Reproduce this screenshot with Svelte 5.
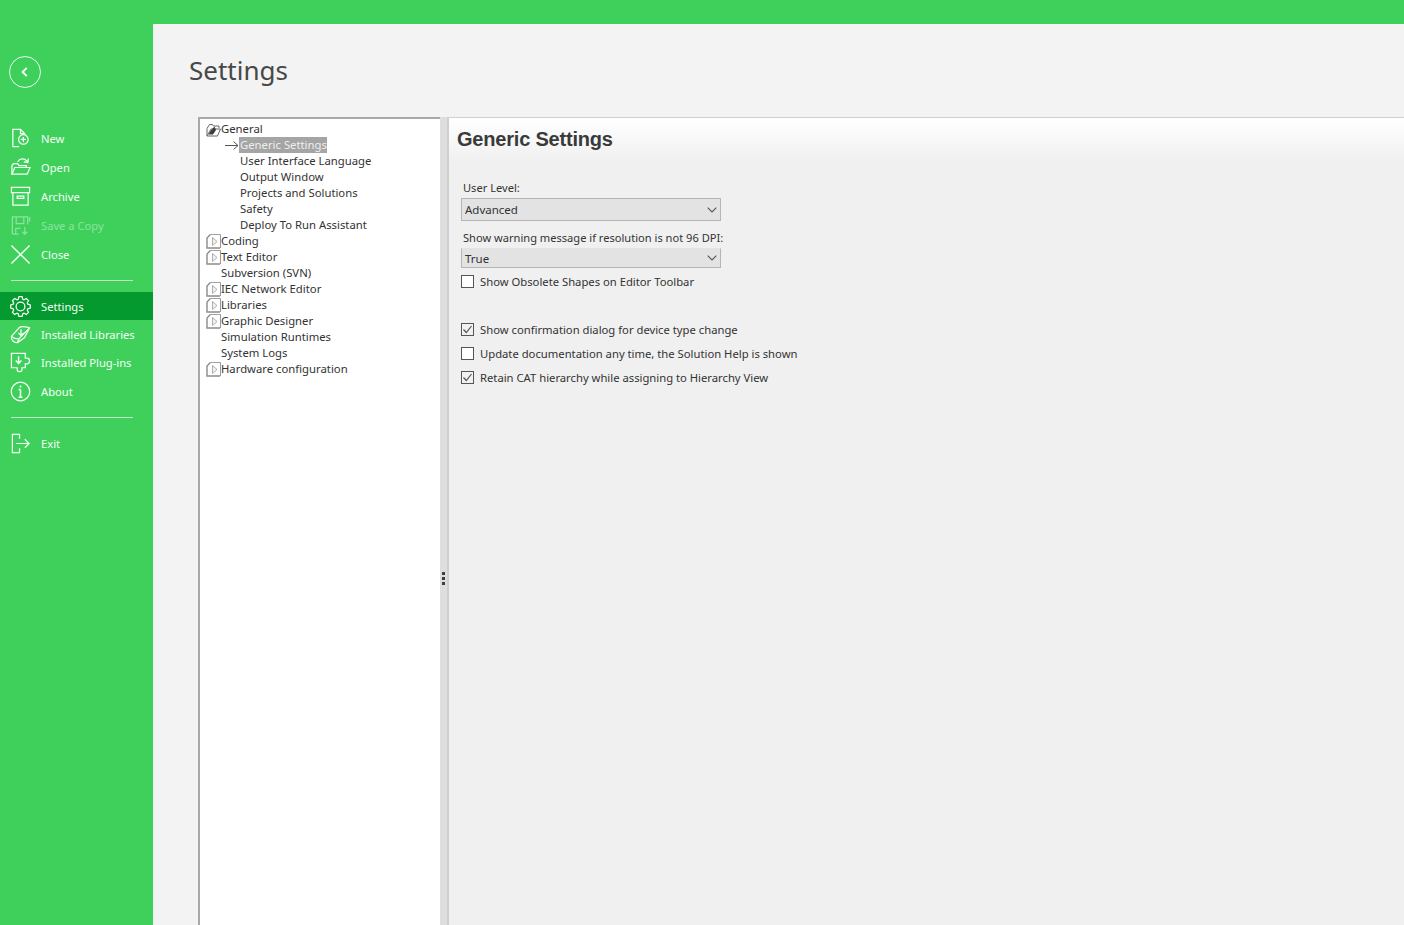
<script>
  const nav1 = [
    { label: 'New', icon: 'new' },
    { label: 'Open', icon: 'open' },
    { label: 'Archive', icon: 'archive' },
    { label: 'Save a Copy', icon: 'save', disabled: true },
    { label: 'Close', icon: 'close' }
  ];
  const nav2 = [
    { label: 'Settings', icon: 'gear', active: true },
    { label: 'Installed Libraries', icon: 'lib' },
    { label: 'Installed Plug-ins', icon: 'plug' },
    { label: 'About', icon: 'info' }
  ];
  const tree = [
    { t: 'General', k: 'open' },
    { t: 'Generic Settings', k: 'sel' },
    { t: 'User Interface Language', k: 'sub' },
    { t: 'Output Window', k: 'sub' },
    { t: 'Projects and Solutions', k: 'sub' },
    { t: 'Safety', k: 'sub' },
    { t: 'Deploy To Run Assistant', k: 'sub' },
    { t: 'Coding', k: 'closed' },
    { t: 'Text Editor', k: 'closed' },
    { t: 'Subversion (SVN)', k: 'leaf' },
    { t: 'IEC Network Editor', k: 'closed' },
    { t: 'Libraries', k: 'closed' },
    { t: 'Graphic Designer', k: 'closed' },
    { t: 'Simulation Runtimes', k: 'leaf' },
    { t: 'System Logs', k: 'leaf' },
    { t: 'Hardware configuration', k: 'closed' }
  ];

  function gearPath(cx, cy, outer, inner, teeth) {
    const pts = [];
    const step = (Math.PI * 2) / teeth;
    for (let i = 0; i < teeth; i++) {
      const a = i * step - Math.PI / 2;
      const w = step * 0.2;
      const p = [
        [a - step / 2 + w * 0.55, inner],
        [a - w, outer],
        [a + w, outer],
        [a + step / 2 - w * 0.55, inner]
      ];
      for (const [ang, r] of p) {
        pts.push(`${(cx + r * Math.cos(ang)).toFixed(2)} ${(cy + r * Math.sin(ang)).toFixed(2)}`);
      }
    }
    return 'M' + pts.join('L') + 'Z';
  }
  const gear = gearPath(11, 11, 10.4, 8, 8);
</script>

{#snippet icon(name)}
  <svg class="ico" viewBox="0 0 22 22" fill="none" stroke="currentColor" stroke-width="1.3">
    {#if name === 'new'}
      <path d="M9.5 19.5H3V1.5H11L15.5 6V7M11 1.5V6H15.5" />
      <circle cx="14" cy="12" r="5" />
      <path d="M14 9.3V14.7M11.3 12H16.7" />
    {:else if name === 'open'}
      <path d="M2 18V9L3.5 7H8L9.5 9H17V11" />
      <path d="M2 18L5 11H21L18 18Z" />
      <path d="M8 5C10 1.5 14.5 .8 17.5 3.8L18.5 5.5M19.2 1.5L18.7 5.7L14.5 5.2" />
    {:else if name === 'archive'}
      <path d="M1.5 1.5H20.5V7H1.5ZM3 7V20H19V7" />
      <path d="M7.5 10.5H14.5V13H7.5Z" />
    {:else if name === 'save'}
      <path d="M2.5 20V2H18.5V10M2.5 20H9M6.5 2V9H14.5V2M6 20V14H11" />
      <path d="M15.5 12.5V20M13 17.5L15.5 20L18 17.5M20.5 2V7" />
    {:else if name === 'close'}
      <path d="M1.5 1.5L20.5 20.5M20.5 1.5L1.5 20.5" stroke-width="1.5" />
    {:else if name === 'gear'}
      <path d={gear} />
      <circle cx="11" cy="11" r="4.6" />
    {:else if name === 'lib'}
      <path d="M1.5 13L10 3.5C12 2.5 15 2.5 20.5 4L15 14.5L8 19.5C4 19.5 1 17 1.5 13Z" />
      <path d="M1.5 13C4 15 7 16 9.5 15.5L20.5 4M9.5 15.5C8.5 17 8 18 8 19.5" />
      <path d="M11.5 5.5V12M8.7 9.3L11.5 12L14.3 9.3" />
    {:else if name === 'plug'}
      <path d="M1.5 1.5H16V6.5H17.5C19.5 6.5 20.5 8 20.5 9.5C20.5 11 19.5 12.5 17.5 12.5H16V16.5H12.5V18.5C12.5 20 11.5 20.5 10 20.5C8.5 20.5 7.5 20 7.5 18.5V16.5H1.5Z" />
      <path d="M9 4.5V12M6 9L9 12L12 9" stroke-width="1.5" />
    {:else if name === 'info'}
      <circle cx="11" cy="11" r="9.7" />
      <path d="M11 9V17M9 17H13M9 9H11" stroke-width="1.6" />
      <circle cx="11" cy="5.7" r="1.1" fill="currentColor" stroke="none" />
    {:else if name === 'exit'}
      <path d="M10 6V1.5H2.5V20.5H10V16" />
      <path d="M6.5 11H20M15.5 6.5L20 11L15.5 15.5" />
    {/if}
  </svg>
{/snippet}

{#snippet twisty(open)}
  <svg class="twisty" viewBox="0 0 15 15" fill="none">
    {#if open}
      <path d="M1 14V6.5L3.5 2.5H6.5L7.5 4H13V6" stroke="#666" stroke-width="1" />
      <path d="M1 14H11.5L14.5 7H5Z" stroke="#666" stroke-width="1" />
      <path d="M2.5 12.5L4.5 9L8.5 4.5L10 8L7 12.5Z" fill="#3c3c3c" />
    {:else}
      <path d="M4.5 .5H14.5" stroke="#a0a0a0" stroke-width="1" />
      <path d="M4.5 .5L1 4V14H14" stroke="#8a8a8a" stroke-width="1.4" />
      <path d="M14.5 .5V14" stroke="#999" stroke-width="1" />
      <path d="M6.5 3.5L11 7.5L6.5 11.5Z" fill="#f4f4f4" stroke="#a5a5a5" stroke-width=".9" />
    {/if}
  </svg>
{/snippet}

{#snippet check(checked)}
  <span class="check" class:on={checked}>
    {#if checked}
      <svg viewBox="0 0 11 11" fill="none"><path d="M1.5 5.5L4.3 8.5L9.5 2" stroke="#555" stroke-width="1.2" /></svg>
    {/if}
  </span>
{/snippet}

{#snippet combo(value, low)}
  <div class="combo" class:low>
    <span>{value}</span>
    <svg viewBox="0 0 10 6" fill="none"><path d="M.7 .7L5 5L9.3 .7" stroke="#555" stroke-width="1.1" /></svg>
  </div>
{/snippet}

<div class="page">
  <aside class="sidebar">
    <button class="back" aria-label="Back">
      <svg viewBox="0 0 10 12" fill="none"><path d="M6.5 2.5L3 6L6.5 9.5" stroke="#fff" stroke-width="1.6" /></svg>
    </button>
    <nav class="group first">
      {#each nav1 as n}
        <div class="item" class:disabled={n.disabled}>{@render icon(n.icon)}<span>{n.label}</span></div>
      {/each}
    </nav>
    <hr />
    <nav class="group second">
      {#each nav2 as n}
        <div class="item tight" class:active={n.active}>{@render icon(n.icon)}<span>{n.label}</span></div>
      {/each}
    </nav>
    <hr class="low" />
    <div class="item exit">{@render icon('exit')}<span>Exit</span></div>
  </aside>

  <main class="main">
    <div class="topbar"></div>
    <h1>Settings</h1>
    <div class="panels">
      <div class="tree">
        {#each tree as r}
          <div class="row {r.k}">
            {#if r.k === 'open'}{@render twisty(true)}{:else if r.k === 'closed'}{@render twisty(false)}{/if}
            {#if r.k === 'sel'}
              <svg class="arrow" viewBox="0 0 14 9" fill="none"><path d="M0 4.5H13M8.5 .5L13 4.5L8.5 8.5" stroke="#555" stroke-width="1" /></svg>
            {/if}
            <span>{r.t}</span>
          </div>
        {/each}
      </div>
      <div class="splitter"><i></i><i></i><i></i></div>
      <section class="content">
        <h2>Generic Settings</h2>
        <div class="lbl first-lbl">User Level:</div>
        {@render combo('Advanced', false)}
        <div class="lbl second-lbl">Show warning message if resolution is not 96 DPI:</div>
        {@render combo('True', true)}
        <div class="cb cb0">{@render check(false)}<span>Show Obsolete Shapes on Editor Toolbar</span></div>
        <div class="cb cb1">{@render check(true)}<span>Show confirmation dialog for device type change</span></div>
        <div class="cb">{@render check(false)}<span>Update documentation any time, the Solution Help is shown</span></div>
        <div class="cb">{@render check(true)}<span>Retain CAT hierarchy while assigning to Hierarchy View</span></div>
      </section>
    </div>
  </main>
</div>

<style>
  :global(body) { margin: 0; overflow: hidden; }
  .page {
    display: flex;
    width: 1404px;
    height: 925px;
    overflow: hidden;
    font-family: "Noto Sans", "Open Sans", sans-serif;
    font-size: 11.25px;
    color: #2b2b2b;
    background: #f3f3f3;
  }
  .sidebar {
    width: 153px;
    flex: none;
    background: #3fd05c;
    color: #fff;
    display: flex;
    flex-direction: column;
    padding-top: 56px;
    box-sizing: border-box;
  }
  .back {
    width: 32px;
    height: 32px;
    margin-left: 9px;
    padding: 0;
    border: 1.5px solid #eafbef;
    border-radius: 50%;
    background: none;
    display: flex;
    align-items: center;
    justify-content: center;
    box-sizing: border-box;
  }
  .back svg { width: 12px; height: 14px; }
  .group.first { margin-top: 36px; }
  .item {
    display: flex;
    align-items: center;
    height: 29px;
    padding-left: 10px;
    gap: 10px;
    font-size: 11.2px;
    color: #f4fff6;
  }
  .item.tight { height: 28px; }
  .item.tight:last-child { height: 30px; }
  .item.active { background: #059a30; }
  .item.disabled { color: #8ce49d; }
  .ico { width: 21px; height: 21px; flex: none; }
  hr {
    width: 122px;
    margin: 11px 0 11px 11px;
    border: 0;
    border-top: 1px solid #bfe9c9;
    height: 0;
  }
  hr.low { margin: 11px 0 11px 11px; }
  .group.second { margin: 0; }

  .main { flex: 1; min-width: 0; display: flex; flex-direction: column; }
  .topbar { height: 24px; background: #3fd05c; flex: none; }
  h1 {
    margin: 26px 0 0 36px;
    height: 67px;
    font-size: 26px;
    font-weight: 400;
    line-height: 40px;
    color: #484848;
    flex: none;
  }
  .panels { flex: 1; display: flex; margin-left: 45px; min-height: 0; }
  .tree {
    width: 242px;
    flex: none;
    box-sizing: border-box;
    background: #fff;
    border-top: 2px solid #a8a8a8;
    border-left: 2px solid #a8a8a8;
    padding: 2px 0 0 6px;
    font-size: 11.3px;
  }
  .row {
    height: 16px;
    display: flex;
    align-items: center;
    line-height: 16px;
    white-space: nowrap;
    color: #333;
  }
  .row.leaf { padding-left: 15px; }
  .row.sub { padding-left: 34px; }
  .row.sel { padding-left: 19px; }
  .row.sel span { background: #a5a5a5; color: #eee; padding-left: 1px; }
  .arrow { width: 14px; height: 9px; flex: none; }
  .twisty { width: 15px; height: 15px; flex: none; }
  .splitter {
    width: 9px;
    flex: none;
    box-sizing: border-box;
    background: #dedede;
    box-shadow: inset -2px 0 #cfcfcf;
    display: flex;
    flex-direction: column;
    gap: 2px;
    padding: 455px 0 0 2px;
  }
  .splitter i { width: 3px; height: 3px; background: #3d3d44; }
  .content {
    flex: 1;
    min-width: 0;
    box-sizing: border-box;
    padding: 0 0 0 12px;
    background: linear-gradient(#fff 0, #f0f0f0 44px);
    border-top: 1px solid #cfcfcf;
    color: #333;
  }
  h2 {
    margin: 8px 0 0 -4px;
    height: 26px;
    font-family: "Liberation Sans", Arial, sans-serif;
    font-size: 20px;
    font-weight: 700;
    line-height: 26px;
    letter-spacing: -.2px;
    color: #3a3a3a;
  }
  .lbl { margin-left: 2px; height: 16px; line-height: 16px; font-size: 11.1px; }
  .first-lbl { margin-top: 28px; }
  .second-lbl { margin-top: 9px; }
  .combo {
    width: 260px;
    height: 23px;
    margin-top: 2px;
    box-sizing: border-box;
    background: #e3e3e3;
    border: 1px solid #b5b5b5;
    display: flex;
    align-items: center;
    justify-content: space-between;
    padding: 0 3px;
    font-size: 11.5px;
  }
  .combo.low { height: 20px; border-top-color: #e3e3e3; }
  .combo svg { width: 10px; height: 6px; }
  .cb {
    display: flex;
    align-items: center;
    gap: 6px;
    height: 16px;
    margin: 8px 0 0 0;
    white-space: nowrap;
  }
  .cb0 { margin-top: 5px; }
  .cb1 { margin-top: 32px; }
  .check {
    width: 13px;
    height: 13px;
    box-sizing: border-box;
    border: 1px solid #555;
    background: #fff;
    flex: none;
    display: block;
  }
  .check.on { background: #f1f1f1; }
  .check svg { display: block; width: 11px; height: 11px; }
</style>
